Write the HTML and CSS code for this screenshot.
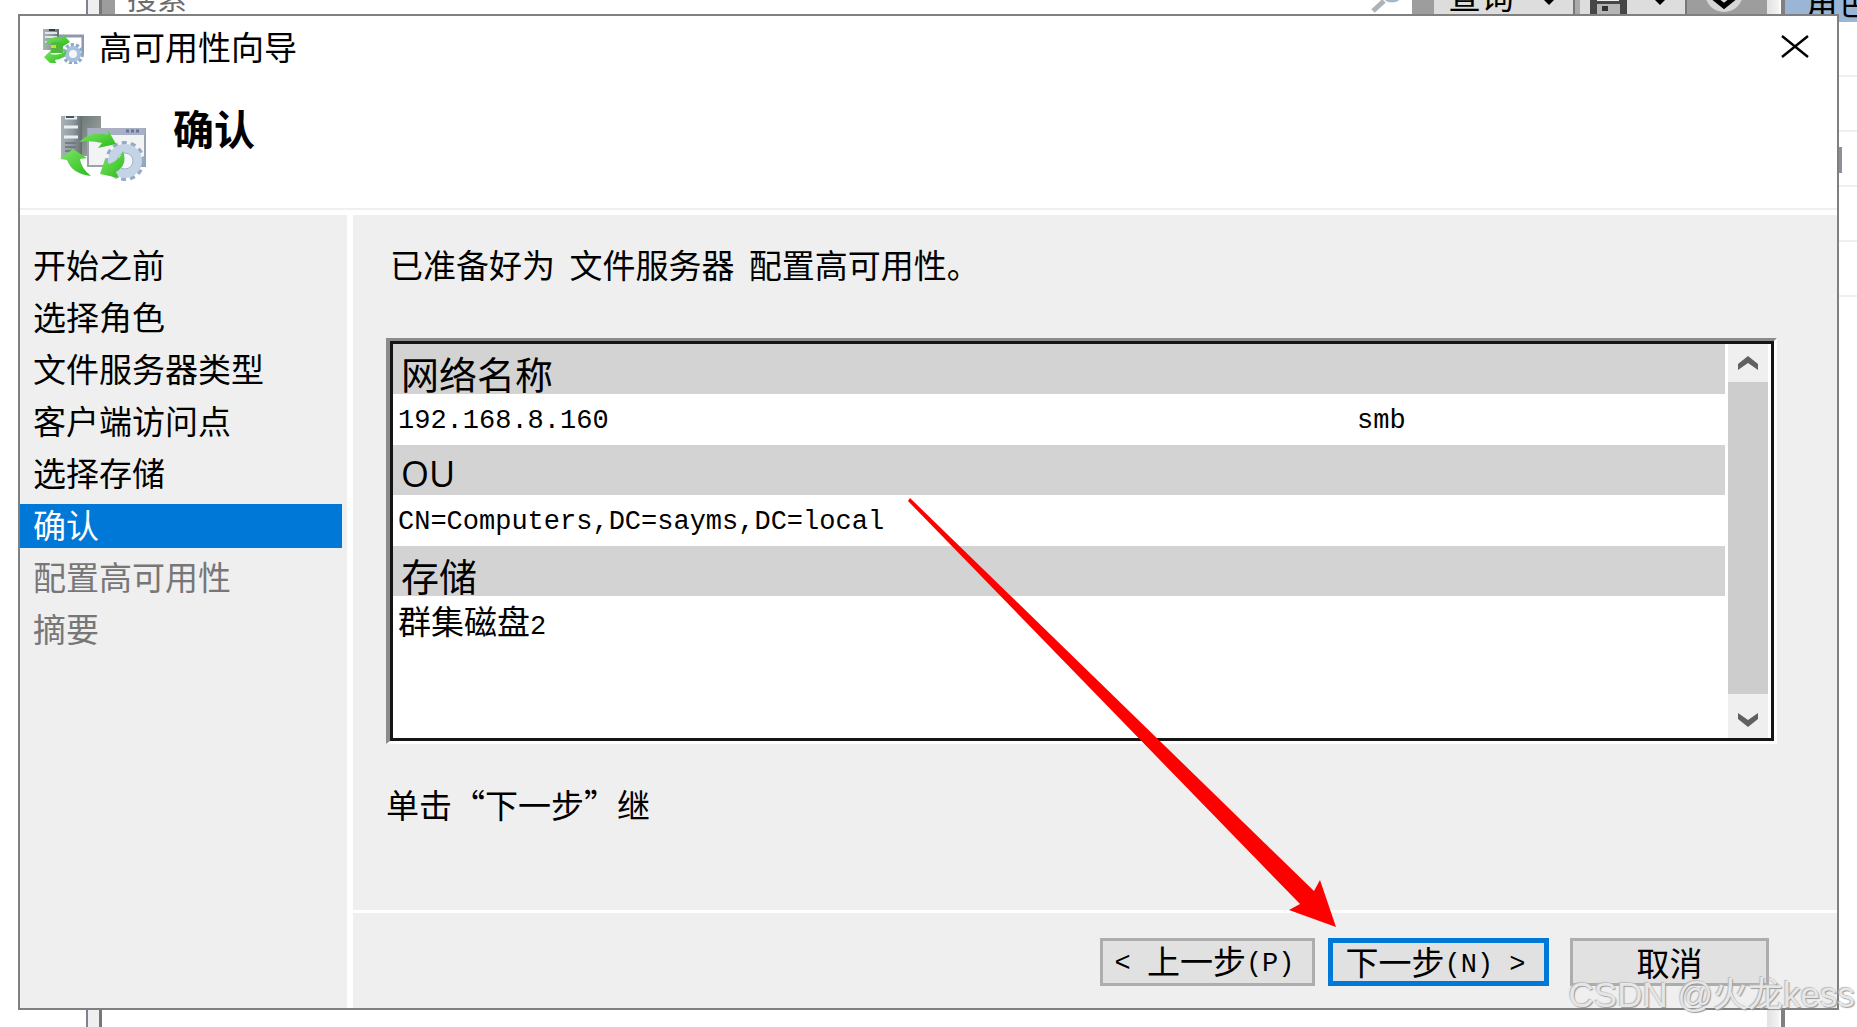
FILE: index.html
```html
<!DOCTYPE html>
<html lang="zh-CN">
<head>
    <meta charset="UTF-8">
    <meta name="viewport" content="width=device-width, initial-scale=1.0">
    <title>高可用性向导</title>
    <link rel="stylesheet" href="styles.css">
</head>
<body>
    <svg width="0" height="0" class="defs" aria-hidden="true">
        <defs>
            <linearGradient id="tower" x1="0" x2="1" y1="0" y2="0">
                <stop offset="0" stop-color="#a9b3b8"/>
                <stop offset="0.6" stop-color="#8d979c"/>
                <stop offset="1" stop-color="#636b6e"/>
            </linearGradient>
            <linearGradient id="tower-back" x1="0" x2="1" y1="0" y2="1">
                <stop offset="0" stop-color="#6e7876"/>
                <stop offset="1" stop-color="#a4adaa"/>
            </linearGradient>
            <linearGradient id="leaf" x1="0" x2="1" y1="0" y2="1">
                <stop offset="0" stop-color="#7fe868"/>
                <stop offset="1" stop-color="#2cba1c"/>
            </linearGradient>
            <symbol id="cluster" viewBox="0 0 88 66" preserveAspectRatio="none">
                <rect x="22" y="1" width="20" height="40" fill="url(#tower-back)"/>
                <rect x="2" y="1" width="21" height="42" fill="url(#tower)"/>
                <path d="M6 3h12M5 12h14M5 22h14" stroke="#e8eff3" stroke-width="3"/>
                <path d="M7 2h8" stroke="#4b565c" stroke-width="2"/>
                <path d="M6 28h11M6 32h11M6 36h11" stroke="#66727a" stroke-width="1.5"/>
                <rect x="29" y="14" width="57" height="37" fill="#f2f3f5" stroke="#9ba1ad" stroke-width="2"/>
                <rect x="29" y="13" width="57" height="7" fill="#a9b0c4"/>
                <path d="M67 16h3M72 16h3M77 16h3" stroke="#6573a0" stroke-width="3"/>
                <circle cx="66" cy="46" r="18" fill="none" stroke="#91abc9" stroke-width="4" stroke-dasharray="5 4"/>
                <circle cx="66" cy="46" r="12.5" fill="none" stroke="#c4d4e5" stroke-width="9"/>
                <circle cx="66" cy="46" r="8" fill="#f3f6fa" stroke="#9eb3cb" stroke-width="1"/>
                <path d="M20 27Q33 15 49 20V15L57 29L39 33L43 28Q32 25 20 27Z" fill="url(#leaf)"/>
                <path d="M1 44L14 34L28 43L21 44Q22 53 32 61Q13 59 8 45Z" fill="url(#leaf)"/>
                <path d="M64 36Q69 50 57 57L60 63L41 59L46 44L50 49Q60 46 64 36Z" fill="url(#leaf)"/>
            </symbol>
            <symbol id="cluster-small" viewBox="0 0 42 36">
                <rect x="1" y="1" width="16" height="21" fill="url(#tower)"/>
                <path d="M3 5h12M3 9h12M3 14h10" stroke="#dfe8e8" stroke-width="2"/>
                <path d="M7 2h6" stroke="#2f3b40" stroke-width="2"/>
                <path d="M17 8H41V26" fill="none" stroke="#8f98ad" stroke-width="3"/>
                <rect x="9" y="13" width="12" height="12" fill="#52b540"/>
                <path d="M2 17Q8 7 21 9V6L28 14L20 19V15Q10 13 2 17Z" fill="url(#leaf)"/>
                <circle cx="31" cy="26" r="9" fill="none" stroke="#8ba9cc" stroke-width="4" stroke-dasharray="3 2"/>
                <circle cx="31" cy="26" r="6" fill="#f3f6fa" stroke="#a9c0dc" stroke-width="4"/>
                <path d="M9 17h5v3H9z" fill="#c5e21c"/>
                <path d="M2 29L9 22V26Q18 28 25 22Q24 31 13 32L14 35L8 35Z" fill="url(#leaf)"/>
            </symbol>
        </defs>
    </svg>

    <!-- parent window, mostly covered by the wizard -->
    <div class="parent">
        <div class="parent-gutter"></div>
        <div class="parent-main">
            <div class="toolbar">
                <span class="toolbar-search">搜索</span>
                <svg class="magnifier" width="34" height="30" viewBox="0 0 34 30">
                    <path d="M3 28L14 18" stroke="#b0b3b5" stroke-width="5"/>
                    <ellipse cx="22" cy="9" rx="10" ry="9" fill="#d8ecfa" stroke="#a4b8c8" stroke-width="3"/>
                </svg>
                <span class="toolbar-query">查询<svg width="18" height="12" viewBox="0 0 18 12"><path d="M0 3H18L9 12Z"/></svg></span>
                <span class="toolbar-save">
                    <svg width="37" height="30" viewBox="0 0 37 30">
                        <path d="M0 0h37v30H0z" fill="#464646"/>
                        <path d="M7 0h22v17H7z" fill="#efefef"/>
                        <path d="M7 20h23v10H7z" fill="#b5b5b5"/>
                        <path d="M12 22h6v5h-6z" fill="#333"/>
                    </svg>
                    <svg width="18" height="12" viewBox="0 0 18 12"><path d="M0 3H18L9 12Z"/></svg>
                </span>
                <span class="toolbar-more">
                    <svg width="40" height="40" viewBox="0 0 40 40">
                        <circle cx="20" cy="20" r="19" fill="#d6d6d6"/>
                        <path d="M10 25L20 33L30 25" fill="none" stroke="#000" stroke-width="5"/>
                    </svg>
                </span>
            </div>
        </div>
        <div class="parent-split"></div>
        <div class="parent-side">
            <div class="side-title">角色</div>
            <ul class="side-rows">
                <li></li><li></li><li class="has-icon"></li><li></li><li></li>
            </ul>
        </div>
    </div>

    <div class="wizard">
        <div class="titlebar">
            <svg width="42" height="36"><use href="#cluster-small"/></svg>
            <span class="titlebar-text">高可用性向导</span>
            <button type="button" class="close" aria-label="关闭">
                <svg width="28" height="23" viewBox="0 0 28 23"><path d="M1 1L27 22M27 1L1 22" stroke="#000" stroke-width="2.4"/></svg>
            </button>
        </div>
        <header class="page-header">
            <svg width="88" height="66"><use href="#cluster"/></svg>
            <h1>确认</h1>
        </header>

        <div class="content">
            <nav class="steps">
                <ul>
                    <li>开始之前</li>
                    <li>选择角色</li>
                    <li>文件服务器类型</li>
                    <li>客户端访问点</li>
                    <li>选择存储</li>
                    <li class="current" aria-current="step">确认</li>
                    <li class="pending">配置高可用性</li>
                    <li class="pending">摘要</li>
                </ul>
            </nav>

            <main class="main">
                <div class="page">
                    <p class="intro">已准备好为 <span class="role">文件服务器</span> 配置高可用性。</p>
                    <div class="report">
                        <div class="report-view">
                            <table>
                                <tbody>
                                    <tr><th colspan="2">网络名称</th></tr>
                                    <tr><td class="latin">192.168.8.160</td><td class="latin value">smb</td></tr>
                                    <tr><th colspan="2" class="ou">OU</th></tr>
                                    <tr><td class="latin" colspan="2">CN=Computers,DC=sayms,DC=local</td></tr>
                                    <tr><th colspan="2">存储</th></tr>
                                    <tr><td colspan="2">群集磁盘<span class="latin">2</span></td></tr>
                                </tbody>
                            </table>
                            <div class="scrollbar">
                                <button type="button" class="scroll-up" aria-label="向上滚动">
                                    <svg width="20" height="14" viewBox="0 0 20 14"><path d="M0 8L10 0L20 8V14L10 7L0 14Z" fill="#606060"/></svg>
                                </button>
                                <div class="thumb"></div>
                                <button type="button" class="scroll-down" aria-label="向下滚动">
                                    <svg width="20" height="14" viewBox="0 0 20 14"><path d="M0 6L10 14L20 6V0L10 7L0 0Z" fill="#606060"/></svg>
                                </button>
                            </div>
                        </div>
                    </div>
                    <p class="hint">单击“下一步”继</p>
                </div>
                <footer class="buttons">
                    <button type="button" class="btn back"><span class="latin">&lt; </span>上一步<span class="latin">(P)</span></button>
                    <button type="button" class="btn next">下一步<span class="latin">(N) &gt;</span></button>
                    <button type="button" class="btn cancel">取消</button>
                </footer>
            </main>
        </div>
    </div>

    <svg class="pointer" width="430" height="432" viewBox="0 0 430 432">
        <path d="M2 0L406 393L412 382L428 429L381 412L392 406L0 3Z" fill="#ff0000"/>
    </svg>
    <div class="watermark">CSDN @火龙kess</div>
</body>
</html>
```

FILE: styles.css
```css
:root {
    --face: #efefef;
    --line: #808080;
    --accent: #0078d7;
    --band: #d3d3d3;
    --ui-font: "Noto Sans CJK SC", sans-serif;
    --latin-font: "Liberation Mono", "Noto Sans CJK SC", monospace;
}
* {
    margin: 0;
    padding: 0;
    box-sizing: border-box;
}
body {
    position: relative;
    display: flex;
    min-height: 100vh;
    padding: 14px 18px 17px 18px;
    overflow: hidden;
    background-color: white;
    color: #000;
    font-family: var(--ui-font);
    font-size: 33px;
    line-height: 44px;
}
ul {
    list-style: none;
}
button {
    border: none;
    background: none;
    color: inherit;
    font: inherit;
}
svg {
    display: block;
    flex: none;
}
.defs {
    position: absolute;
}
.latin {
    font-family: var(--latin-font);
    font-size: 27px;
}

/* parent window */
.parent {
    position: absolute;
    inset: 0;
    display: flex;
    padding-left: 86px;
}
.parent-gutter {
    width: 16px;
    background-color: #efefef;
    border-left: 2px solid #7d828c;
    border-right: 3px solid #777;
}
.parent-main {
    flex: 1;
    min-width: 0;
}
.toolbar {
    display: flex;
    height: 44px;
    margin-top: -30px;
    border-left: 13px solid #9d9d9d;
}
.toolbar-search {
    flex: 1;
    padding-left: 12px;
    color: #6d6d6d;
    font-size: 30px;
    line-height: 52px;
}
.magnifier {
    margin: 13px 8px 0 0;
}
.toolbar-query,
.toolbar-save {
    display: flex;
    background-color: #ddd;
}
.toolbar-query {
    align-items: flex-end;
    gap: 26px;
    padding: 0 15px 0 14px;
    border-left: 22px solid #9d9d9d;
    border-right: 2px solid #777;
    line-height: 38px;
}
.toolbar-save {
    align-items: flex-end;
    gap: 24px;
    padding: 0 16px 0 10px;
    border-left: 5px solid #aaa;
}
.toolbar-query svg,
.toolbar-save svg + svg {
    margin-bottom: 9px;
}
.toolbar-more {
    width: 82px;
    padding: 3px 17px 0;
    background-color: #9d9d9d;
    border-left: 2px solid #777;
}
.parent-split {
    width: 18px;
    background: linear-gradient(to right, #e4e4e4 2px, #f4f4f4 12px, #fff 13px);
    border-right: 4px solid #808080;
}
.parent-side {
    width: 72px;
}
.side-title {
    height: 22px;
    padding-left: 20px;
    overflow: hidden;
    background-color: #9ab5d6;
    line-height: 2px;
    white-space: nowrap;
}
.side-rows li {
    height: 55px;
    border-bottom: 2px solid #efefef;
}
.side-rows .has-icon {
    padding-top: 15px;
}
.has-icon::before {
    content: "";
    display: block;
    width: 57px;
    height: 26px;
    background-color: #8b9099;
}

/* wizard */
.wizard {
    position: relative;
    display: flex;
    flex: 1;
    flex-direction: column;
    min-width: 0;
    background-color: white;
    border: 2px solid var(--line);
}
.titlebar {
    display: flex;
    align-items: center;
    height: 60px;
    padding: 0 28px 0 22px;
}
.titlebar-text {
    flex: 1;
    padding-left: 15px;
}
.page-header {
    display: flex;
    gap: 26px;
    height: 134px;
    padding: 39px 0 0 39px;
    border-bottom: 2px solid #efefef;
}
.page-header h1 {
    font-size: 41px;
    line-height: 24px;
}
.content {
    display: flex;
    flex: 1;
    gap: 6px;
    padding-top: 5px;
}
.steps {
    width: 327px;
    padding: 29px 5px 0 0;
    background-color: var(--face);
}
.steps ul {
    display: grid;
    row-gap: 8px;
}
.steps li {
    height: 44px;
    padding-left: 13px;
    line-height: 40px;
}
.steps .current {
    background-color: var(--accent);
    color: white;
}
.steps .pending {
    color: #777;
}
.main {
    display: flex;
    flex: 1;
    flex-direction: column;
    min-width: 0;
    background-color: var(--face);
}
.page {
    flex: 1;
    padding: 27px 60px 0 33px;
}
.intro {
    padding-left: 4px;
    margin-bottom: 52px;
}
.role {
    margin: 0 7px;
}
.report {
    border: 3px solid;
    border-color: #8c8c8c white white #8c8c8c;
    border-left-width: 4px;
}
.report-view {
    display: flex;
    gap: 3px;
    height: 400px;
    padding-right: 3px;
    background-color: white;
    border: 3px solid #151515;
}
table {
    flex: 1;
    align-self: flex-start;
    border-collapse: collapse;
    table-layout: fixed;
}
th {
    height: 50px;
    padding: 8px 8px 0;
    background-color: var(--band);
    font-size: 38px;
    font-weight: 400;
    line-height: 42px;
    text-align: left;
}
th.ou {
    font-family: "Open Sans", sans-serif;
    font-size: 36px;
}
td {
    height: 51px;
    padding: 0 5px;
    line-height: 48px;
}
td.latin {
    padding-top: 3px;
}
.value {
    width: 28%;
}
.scrollbar {
    display: flex;
    flex-direction: column;
    width: 40px;
    background-color: var(--face);
}
.scroll-up,
.scroll-down {
    display: flex;
    align-items: center;
    justify-content: center;
    height: 38px;
}
.scroll-down {
    height: 44px;
    padding-top: 8px;
}
.thumb {
    flex: 1;
    background-color: #cdcdcd;
}
.hint {
    margin-top: 38px;
}
.buttons {
    display: flex;
    justify-content: flex-end;
    height: 98px;
    padding: 25px 68px 0;
    border-top: 3px solid white;
}
.btn {
    width: 199px;
    height: 48px;
    background-color: #e1e1e1;
    border: 3px solid #adadad;
    line-height: 40px;
    white-space: pre;
}
.btn .latin {
    vertical-align: 3px;
}
.btn.back,
.btn.next {
    padding-right: 6px;
    line-height: 36px;
}
.btn.back {
    width: 215px;
    margin-right: 13px;
}
.btn.next {
    width: 221px;
    margin-right: 21px;
    border: 5px solid var(--accent);
}

/* overlays */
.pointer {
    position: absolute;
    top: 498px;
    left: 908px;
}
.watermark {
    position: absolute;
    right: 2px;
    bottom: 10px;
    color: rgba(240, 240, 240, 0.9);
    font-family: "Liberation Sans", "Noto Sans CJK SC", sans-serif;
    font-size: 35px;
    text-shadow: 1px 1px 1px #999, -1px -1px 1px #bbb;
}
```
